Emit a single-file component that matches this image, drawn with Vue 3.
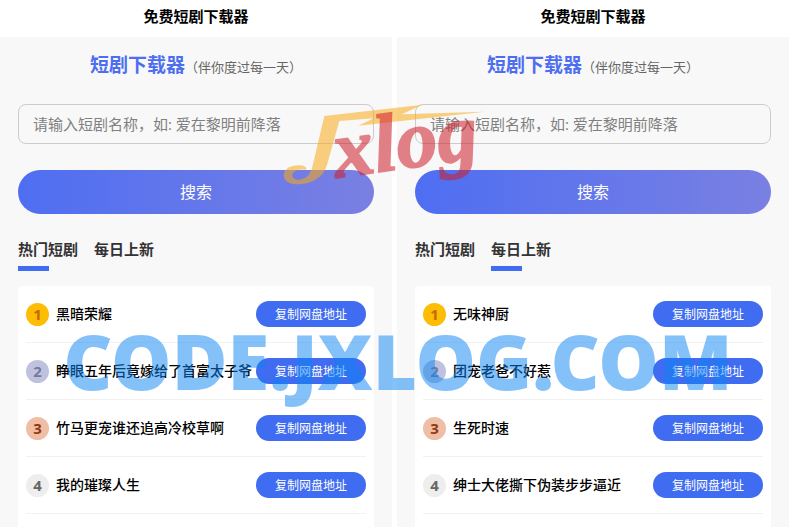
<template>
  <div class="page">
    <section v-for="panel in panels" :key="panel.id" class="panel">
      <header class="navbar">免费短剧下载器</header>

      <div class="content">
        <h1 class="heading">短剧下载器<small>（伴你度过每一天）</small></h1>

        <form @submit.prevent="search(panel)">
          <input
            v-model="panel.keyword"
            class="search-input"
            type="text"
            aria-label="短剧名称"
            placeholder="请输入短剧名称，如: 爱在黎明前降落"
          />
          <button class="search-button" type="submit">搜索</button>
        </form>

        <div class="tabs">
          <button
            v-for="(tab, index) in tabs"
            :key="tab.name"
            type="button"
            class="tab"
            :class="{ active: panel.active === index }"
            @click="panel.active = index"
          >{{ tab.name }}</button>
        </div>

        <ul class="list">
          <li v-for="(title, index) in visibleItems(panel)" :key="title" class="row">
            <span class="rank" :class="'rank-' + (index + 1)">{{ index + 1 }}</span>
            <span class="name">{{ title }}</span>
            <button type="button" class="copy-button">复制网盘地址</button>
          </li>
        </ul>
      </div>
    </section>

    <svg class="logo" viewBox="0 0 690 330">
      <path
        class="bolt"
        d="M160 78 L455 44 L392 73 L640 65 L262 107 L308 85 L205 93 L168 225 C158 262 122 283 80 283 C50 283 38 270 38 255 C40 235 60 226 85 226 C100 226 107 232 106 240 C88 236 66 240 64 256 C64 268 80 272 92 268 C115 262 122 240 126 222 Z"
      />
      <text class="logo-text" x="196" y="264" transform="rotate(-8 196 264)">xlog</text>
    </svg>
    <div class="watermark">CODE.JXLOG.COM</div>
  </div>
</template>

<script setup>
import { ref } from "vue"

const tabs = [
  { name: "热门短剧", items: ["黑暗荣耀", "睁眼五年后竟嫁给了首富太子爷", "竹马更宠谁还追高冷校草啊", "我的璀璨人生"] },
  { name: "每日上新", items: ["无味神厨", "团宠老爸不好惹", "生死时速", "绅士大佬撕下伪装步步逼近"] }
]

const panels = ref([
  { id: 1, active: 0, keyword: "", query: "" },
  { id: 2, active: 1, keyword: "", query: "" }
])

function search(panel) {
  panel.query = panel.keyword.trim()
}

function visibleItems(panel) {
  return tabs[panel.active].items.filter(title => title.includes(panel.query))
}
</script>

<style>
body {
  margin: 0;
  background: #fff;
}
</style>

<style scoped>
.page {
  position: relative;
  display: grid;
  grid-template-columns: 1fr 1fr;
  gap: 5px;
  min-height: 100vh;
  padding-right: 2px;
  box-sizing: border-box;
  overflow: hidden;
  font-family: "Open Sans", "Noto Sans CJK SC", sans-serif;
}

.panel {
  display: flex;
  flex-direction: column;
  min-width: 0;
}

.navbar {
  padding: 3px 0 9px;
  line-height: 25px;
  text-align: center;
  font-size: 15px;
  font-weight: 700;
  font-family: "Noto Sans CJK SC", sans-serif;
  color: #000;
}

.content {
  flex: 1;
  display: flex;
  flex-direction: column;
  padding: 14px 18px 0;
  background: #f8f8f8;
}

.heading {
  margin: 0 0 23px;
  line-height: 28px;
  text-align: center;
  font-size: 19px;
  font-weight: 700;
  color: #4e6ef2;
}

.heading small {
  font-size: 13px;
  font-weight: 400;
  color: #666;
}

button,
input {
  font-family: inherit;
}

button {
  border: none;
  cursor: pointer;
}

.search-input {
  display: block;
  width: 100%;
  height: 40px;
  box-sizing: border-box;
  padding: 0 14px;
  border: 1px solid #ccc;
  border-radius: 8px;
  background: transparent;
  font-size: 15px;
}

.search-input::placeholder {
  color: #808080;
}

.search-button {
  display: block;
  width: 100%;
  height: 44px;
  margin-top: 26px;
  padding: 0 0 2px;
  border-radius: 22px;
  background: linear-gradient(to right, #4e6ef2, #7a80e2);
  color: #fff;
  font-size: 16px;
}

.tabs {
  display: flex;
  gap: 16px;
  margin: 23px 0 15px;
}

.tab {
  padding: 0;
  background: none;
  font-size: 15px;
  font-weight: 700;
  line-height: 24px;
  color: #333;
}

.tab::after {
  content: "";
  display: block;
  width: 31px;
  height: 5px;
  margin-top: 5px;
}

.tab.active::after {
  background: #3f6cf0;
}

.list {
  flex: 1;
  margin: 0;
  padding: 0 8px;
  list-style: none;
  border-radius: 4px 4px 0 0;
  background: #fff;
}

.row {
  display: flex;
  align-items: center;
  height: 56px;
  border-bottom: 1px solid #f2f2f2;
}

.rank {
  flex: none;
  width: 23px;
  height: 23px;
  margin-right: 7px;
  border-radius: 50%;
  background: #eee;
  color: #666;
  text-align: center;
  font-size: 15px;
  font-weight: 700;
  line-height: 23px;
}

.rank-1 {
  background: #fdbd03;
  color: #c46a08;
}

.rank-2 {
  background: #bfc2de;
  color: #77799a;
}

.rank-3 {
  background: #f0bda5;
  color: #8f3a10;
}

.name {
  flex: 1;
  min-width: 0;
  padding-bottom: 2px;
  font-size: 14px;
  font-weight: 500;
  color: #000;
  white-space: nowrap;
}

.copy-button {
  flex: none;
  width: 110px;
  height: 26px;
  padding: 0;
  border-radius: 13px;
  background: #3f6cf0;
  color: #fff;
  font-size: 12px;
}

.logo {
  position: absolute;
  top: 90px;
  left: calc(50% - 125px);
  width: 230px;
  height: 110px;
  overflow: visible;
  pointer-events: none;
}

.bolt {
  fill: rgba(248, 170, 24, 0.55);
}

.logo-text {
  fill: #d01e2a;
  stroke: #d01e2a;
  stroke-width: 5;
  opacity: 0.55;
  font-family: "Liberation Serif", serif;
  font-size: 246px;
  font-style: italic;
  font-weight: 700;
}

.watermark {
  position: absolute;
  top: 309px;
  left: 8%;
  font-family: "Noto Sans", "Open Sans", sans-serif;
  font-size: 76px;
  font-weight: 900;
  line-height: 104px;
  white-space: nowrap;
  color: rgba(12, 132, 244, 0.5);
  pointer-events: none;
}
</style>
